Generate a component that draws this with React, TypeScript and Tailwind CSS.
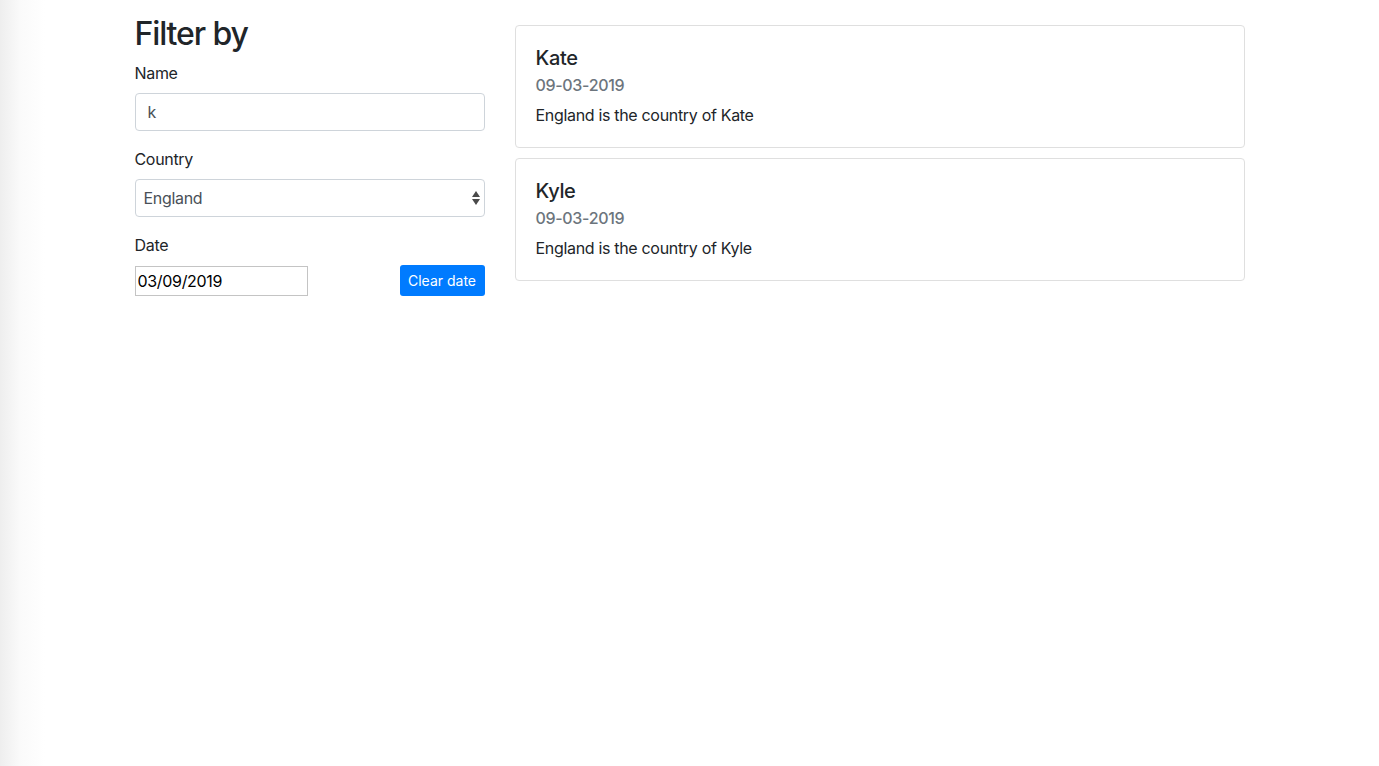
import { useState } from 'react';

const people = [
  { name: 'Kate', date: '09-03-2019', country: 'England' },
  { name: 'Kyle', date: '09-03-2019', country: 'England' },
];

const App = () => {
  const [name, setName] = useState('k');
  const [country, setCountry] = useState('England');
  const [date, setDate] = useState('03/09/2019');

  return (
    <div className="min-h-[766px] w-full bg-[linear-gradient(to_right,#eeeeee,#fafafa_20px,#ffffff_45px)] font-['Inter','Liberation_Sans',sans-serif] tracking-[-0.02em] text-[#212529]">
      <div className="mx-auto flex w-[1140px]">
        <div className="w-[380px] px-[15px] pt-[15px]">
          <h2 className="mb-2 text-[32px] leading-[38.4px] font-medium tracking-[-0.035em]">Filter by</h2>
          <div className="mb-4">
            <label className="mb-2 block text-base leading-6">Name</label>
            <input
              value={name}
              onChange={(e) => setName(e.target.value)}
              className="block h-[38px] w-full rounded-[4px] border border-[#ced4da] bg-white px-3 text-base text-[#495057] outline-none"
            />
          </div>
          <div className="mb-4">
            <label className="mb-2 block text-base leading-6">Country</label>
            <div className="relative">
              <select
                value={country}
                onChange={(e) => setCountry(e.target.value)}
                className="block h-[38px] w-full appearance-none rounded-[4px] border border-[#ced4da] bg-white px-2 text-base text-[#495057] outline-none"
              >
                <option>England</option>
                <option>France</option>
                <option>Germany</option>
              </select>
              <svg className="pointer-events-none absolute right-[4px] top-[11px]" width="10" height="16" viewBox="0 0 10 16">
                <path d="M5 1 L9 7 H1 Z" fill="#4a4a4a" />
                <path d="M1 9 H9 L5 15 Z" fill="#4a4a4a" />
              </svg>
            </div>
          </div>
          <div>
            <label className="mb-2 block text-base leading-6">Date</label>
            <div className="flex items-center justify-between">
              <input
                value={date}
                onChange={(e) => setDate(e.target.value)}
                className="h-[30px] w-[173px] border border-[#c4c4c4] bg-white px-[2px] text-base text-black outline-none"
              />
              <button
                onClick={() => setDate('')}
                className="h-[31px] w-[85px] rounded-[3px] bg-[#007bff] text-sm tracking-normal text-white"
              >
                Clear date
              </button>
            </div>
          </div>
        </div>
        <div className="w-[760px] px-[15px] pt-[25px]">
          {people.map((p) => (
            <div key={p.name} className="mb-[10px] rounded-[4px] border border-[#dfdfdf] bg-white p-5">
              <h5 className="mb-3 text-xl leading-6 font-medium">{p.name}</h5>
              <h6 className="-mt-[6px] mb-2 text-base leading-[19.2px] font-medium text-[#6c757d]">{p.date}</h6>
              <p className="text-base leading-6">
                {p.country} is the country of {p.name}
              </p>
            </div>
          ))}
        </div>
      </div>
    </div>
  );
};

export default App;
